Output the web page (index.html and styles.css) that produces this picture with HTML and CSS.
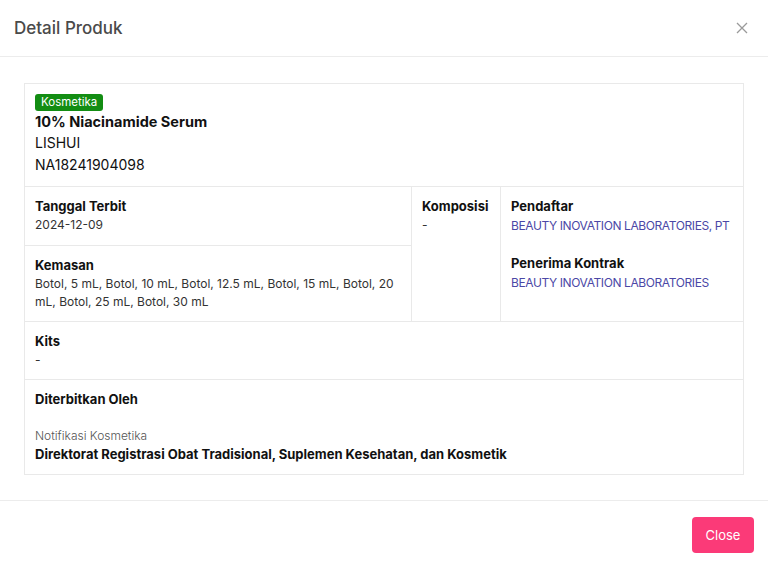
FILE: index.html
```html
<!DOCTYPE html>
<html lang="id">
<head>
    <meta charset="UTF-8">
    <meta name="viewport" content="width=device-width, initial-scale=1.0">
    <title>Detail Produk</title>
    <link rel="stylesheet" href="styles.css">
</head>
<body>

<div class="modal">
    <div class="modal-header">
        <h5 class="modal-title">Detail Produk</h5>
        <button class="btn-close" type="button" aria-label="Close">
            <svg width="12" height="12" viewBox="0 0 12 12">
                <path d="M1 1 L11 11 M11 1 L1 11" stroke="#9a9a9a" stroke-width="1.3" fill="none"/>
            </svg>
        </button>
    </div>

    <div class="modal-body">
        <table class="detail-table">
            <colgroup>
                <col class="col-main">
                <col class="col-komposisi">
                <col>
            </colgroup>
            <tr>
                <td colspan="3">
                    <span class="badge">Kosmetika</span>
                    <div class="product-name">10% Niacinamide Serum</div>
                    <div class="product-line">LISHUI</div>
                    <div class="product-line">NA18241904098</div>
                </td>
            </tr>
            <tr>
                <td class="cell-short">
                    <div class="label">Tanggal Terbit</div>
                    <div class="value">2024-12-09</div>
                </td>
                <td rowspan="2">
                    <div class="label">Komposisi</div>
                    <div class="value">-</div>
                </td>
                <td rowspan="2">
                    <div class="label">Pendaftar</div>
                    <div class="value link">BEAUTY INOVATION LABORATORIES, PT</div>
                    <div class="label spaced-lg">Penerima Kontrak</div>
                    <div class="value link">BEAUTY INOVATION LABORATORIES</div>
                </td>
            </tr>
            <tr>
                <td>
                    <div class="label">Kemasan</div>
                    <div class="value">Botol, 5 mL, Botol, 10 mL, Botol, 12.5 mL, Botol, 15 mL, Botol, 20 mL, Botol, 25 mL, Botol, 30 mL</div>
                </td>
            </tr>
            <tr>
                <td colspan="3">
                    <div class="label">Kits</div>
                    <div class="value">-</div>
                </td>
            </tr>
            <tr>
                <td colspan="3">
                    <div class="label">Diterbitkan Oleh</div>
                    <div class="value light spaced">Notifikasi Kosmetika</div>
                    <div class="label">Direktorat Registrasi Obat Tradisional, Suplemen Kesehatan, dan Kosmetik</div>
                </td>
            </tr>
        </table>
    </div>

    <div class="modal-footer">
        <button class="btn-pink" type="button">Close</button>
    </div>
</div>

</body>
</html>
```

FILE: styles.css
```css
body {
    font-family: Inter, "Open Sans", sans-serif;
    background: #fff;
    color: #333;
    margin: 0;
}

.modal {
    width: 768px;
    background: #fff;
}

.modal-header {
    height: 57px;
    display: flex;
    align-items: center;
    justify-content: space-between;
    padding: 0 14px;
    border-bottom: 1px solid #ececec;
    box-sizing: border-box;
}

.modal-title {
    margin: 0;
    font-size: 17px;
    font-weight: 500;
    color: #4a4a4a;
}

.btn-close {
    border: none;
    background: none;
    padding: 0;
    margin-right: 6px;
    display: flex;
    cursor: pointer;
}

.modal-body {
    padding: 26px 24px 25px;
}

.detail-table {
    width: 100%;
    table-layout: fixed;
    border-collapse: collapse;
    font-size: 13px;
    line-height: 19px;
}

.col-main {
    width: 387px;
}

.col-komposisi {
    width: 89px;
}

.detail-table td {
    border: 1px solid #e9e9e9;
    padding: 10px 9px 10px 10px;
    vertical-align: top;
}

.detail-table .cell-short {
    height: 38px;
}

.badge {
    display: block;
    width: max-content;
    background: #138d13;
    color: #fff;
    font-size: 11.5px;
    line-height: 17px;
    padding: 0 6px;
    border-radius: 3px;
}

.product-name {
    font-size: 14.5px;
    font-weight: 700;
    color: #111;
    line-height: 21px;
}

.product-line {
    font-size: 14px;
    color: #111;
    line-height: 22px;
}

.label {
    font-weight: 700;
    color: #111;
}

.value {
    font-size: 12px;
    line-height: 18px;
    color: #333;
}

.link {
    color: #4b47a6;
    line-height: 19px;
    letter-spacing: -0.4px;
    white-space: nowrap;
}

.light {
    font-weight: 300;
    color: #555;
}

.spaced {
    margin-top: 18px;
}

.spaced-lg {
    margin-top: 19px;
}

.modal-footer {
    border-top: 1px solid #ececec;
    display: flex;
    justify-content: flex-end;
    padding: 16px 14px;
}

.btn-pink {
    background: #fb3a78;
    color: #fff;
    border: none;
    border-radius: 4px;
    width: 62px;
    height: 36px;
    font-family: inherit;
    font-size: 13px;
    cursor: pointer;
}
```
